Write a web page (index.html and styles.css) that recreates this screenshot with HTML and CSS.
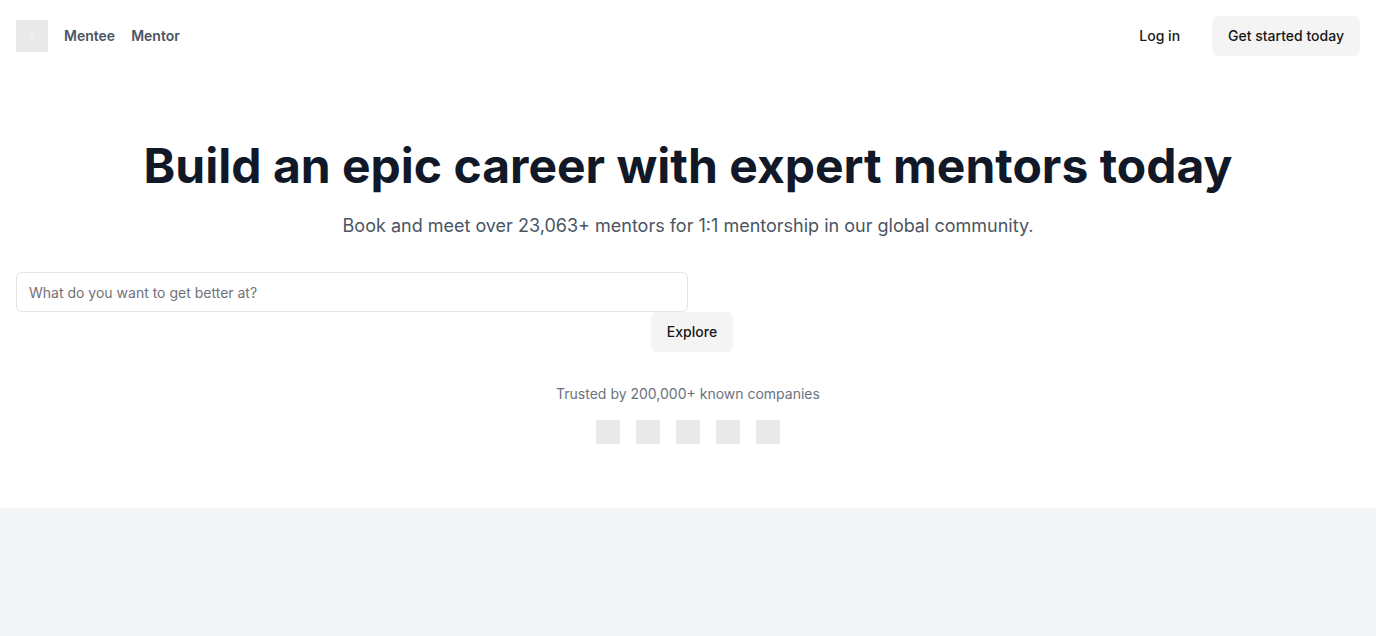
FILE: index.html
```html
<!DOCTYPE html>
<html lang="en">
<head>
<meta charset="utf-8">
<title>Mentorship</title>
<link rel="stylesheet" href="styles.css">
</head>
<body>
<header class="header">
  <nav class="nav">
    <svg class="logo" viewBox="0 0 24 24" aria-hidden="true"><rect width="24" height="24" fill="#e9e9e9"/><circle cx="12" cy="12" r="3" fill="#ececec"/><circle cx="12" cy="12" r="2" fill="#efefef"/></svg>
    <a class="nav-link" href="#">Mentee</a>
    <a class="nav-link" href="#">Mentor</a>
  </nav>
  <div class="actions">
    <button class="button button-ghost" type="button">Log in</button>
    <button class="button" type="button">Get started today</button>
  </div>
</header>
<main class="hero">
  <h1 class="title">Build an epic career with expert mentors today</h1>
  <p class="lead">Book and meet over 23,063+ mentors for 1:1 mentorship in our global community.</p>
  <form class="search">
    <input class="search-input" type="text" aria-label="What do you want to get better at?" placeholder="What do you want to get better at?">
    <button class="button search-button" type="button">Explore</button>
  </form>
  <p class="trusted">Trusted by 200,000+ known companies</p>
  <div class="companies">
    <svg class="company" viewBox="0 0 24 24" aria-hidden="true"><rect width="24" height="24" fill="#e9e9e9"/><circle cx="12" cy="12" r="3" fill="#ececec"/><circle cx="12" cy="12" r="2" fill="#efefef"/></svg>
    <svg class="company" viewBox="0 0 24 24" aria-hidden="true"><rect width="24" height="24" fill="#e9e9e9"/><circle cx="12" cy="12" r="3" fill="#ececec"/><circle cx="12" cy="12" r="2" fill="#efefef"/></svg>
    <svg class="company" viewBox="0 0 24 24" aria-hidden="true"><rect width="24" height="24" fill="#e9e9e9"/><circle cx="12" cy="12" r="3" fill="#ececec"/><circle cx="12" cy="12" r="2" fill="#efefef"/></svg>
    <svg class="company" viewBox="0 0 24 24" aria-hidden="true"><rect width="24" height="24" fill="#e9e9e9"/><circle cx="12" cy="12" r="3" fill="#ececec"/><circle cx="12" cy="12" r="2" fill="#efefef"/></svg>
    <svg class="company" viewBox="0 0 24 24" aria-hidden="true"><rect width="24" height="24" fill="#e9e9e9"/><circle cx="12" cy="12" r="3" fill="#ececec"/><circle cx="12" cy="12" r="2" fill="#efefef"/></svg>
  </div>
</main>
</body>
</html>
```
FILE: styles.css
```css
* { box-sizing: border-box; }
body {
  margin: 0;
  background: #f3f4f6;
  color: #111827;
  font-family: Inter, "Liberation Sans", sans-serif;
  font-size: 14px;
  line-height: 20px;
}
h1, p { margin: 0; }
.header {
  display: flex;
  align-items: center;
  justify-content: space-between;
  padding: 16px;
  background: #fff;
}
.nav { display: flex; align-items: center; gap: 16px; }
.logo { width: 32px; height: 32px; }
.nav-link { color: #4b5563; font-weight: 600; text-decoration: none; }
.actions { display: flex; gap: 16px; }
.button {
  height: 40px;
  padding: 0 16px;
  border: 0;
  border-radius: 6px;
  background: #f4f4f4;
  color: #171717;
  font: inherit;
  font-weight: 500;
}
.button-ghost { background: transparent; }
.hero {
  display: flex;
  flex-direction: column;
  align-items: center;
  padding: 64px 16px;
  background: #fff;
  text-align: center;
}
.title { font-size: 48px; line-height: 60px; font-weight: 700; color: #111827; }
.lead { margin-top: 16px; font-size: 18px; line-height: 28px; color: #4b5563; }
.search { width: 100%; margin-top: 32px; }
.search-input {
  display: block;
  width: 50%;
  height: 40px;
  padding: 0 12px;
  border: 1px solid #e4e4e7;
  border-radius: 6px;
  background: #fff;
  font: inherit;
}
.search-input::placeholder { color: #71717a; }
.search-button { margin-left: 8px; }
.trusted { margin-top: 32px; color: #6b7280; }
.companies { display: flex; gap: 16px; margin-top: 16px; }
.company { width: 24px; height: 24px; }
```
